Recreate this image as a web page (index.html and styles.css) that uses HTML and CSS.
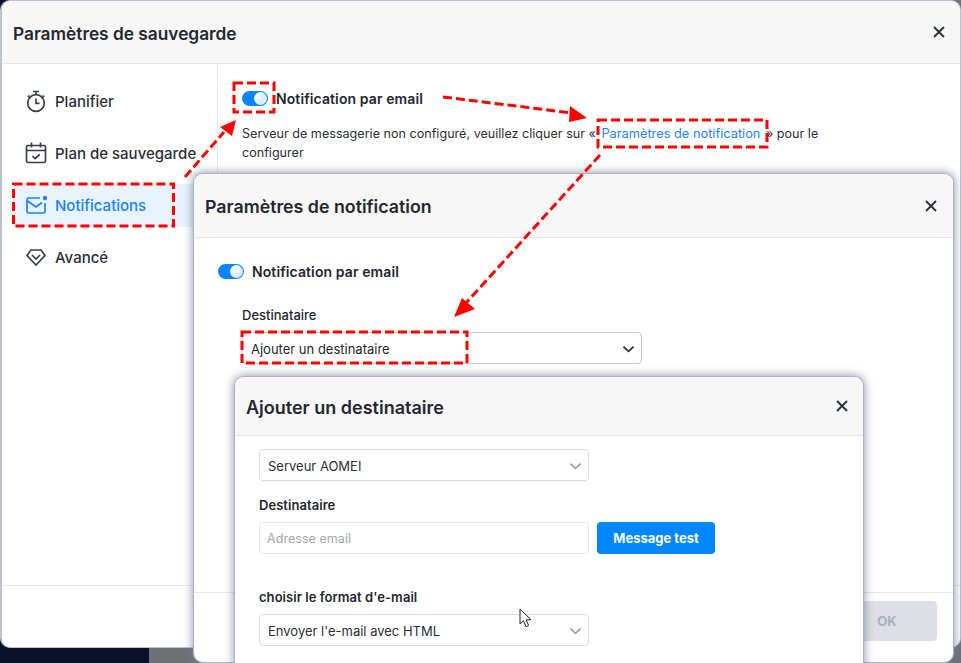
FILE: index.html
```html
<!DOCTYPE html>
<html lang="fr">
<head>
<meta charset="utf-8">
<title>Paramètres de sauvegarde</title>
<link rel="stylesheet" href="styles.css">
</head>
<body>
<div class="desktop">
  <section class="dialog dialog-main">
    <header class="dialog-head head-main">
      <h1>Paramètres de sauvegarde</h1>
      <svg class="close" viewBox="0 0 12 12"><path d="M1 1l10 10M11 1L1 11"/></svg>
    </header>
    <div class="main-body">
      <nav class="side">
        <a class="side-item">
          <svg class="side-icon" viewBox="0 0 24 24"><path d="M9 2.500h6M12 2.500v3M18.400 6.500l1.600 1.600M4 8.100l1.600-1.600"/><circle cx="12" cy="14" r="8.300"/><path d="M12 9.500v4.800h3.500"/></svg>
          <span>Planifier</span>
        </a>
        <a class="side-item">
          <svg class="side-icon" viewBox="0 0 24 24"><rect x="2.500" y="4.500" width="19" height="17" rx="1.500"/><path d="M7.500 1.500v5M16.500 1.500v5M2.500 9.500h19M8.500 15l2.600 2.500 4.600-4"/></svg>
          <span>Plan de sauvegarde</span>
        </a>
        <a class="side-item active">
          <svg class="side-icon" viewBox="0 0 24 24"><path d="M16 5H4.500A1.500 1.500 0 0 0 3 6.500v12A1.500 1.500 0 0 0 4.500 20h15a1.500 1.500 0 0 0 1.500-1.500V10"/><path d="M3.500 8l8.500 6 6-4.500"/><circle class="dot" cx="21" cy="5" r="2.200"/></svg>
          <span>Notifications</span>
        </a>
        <a class="side-item">
          <svg class="side-icon" viewBox="0 0 24 24"><path d="M7 5h10l4 5.500-9 9.500-9-9.500z"/><path d="M8 10l4 4 4-4"/></svg>
          <span>Avancé</span>
        </a>
      </nav>
      <div class="content">
        <div class="switch-row row-main">
          <span class="switch"><i></i></span>
          <strong>Notification par email</strong>
        </div>
        <p class="note">Serveur de messagerie non configuré, veuillez cliquer sur « <a class="link">Paramètres de notification</a> » pour le configurer</p>
      </div>
    </div>
    <div class="rule-main"></div>
  </section>

  <section class="dialog dialog-second">
    <header class="dialog-head head-second">
      <h2>Paramètres de notification</h2>
      <svg class="close" viewBox="0 0 12 12"><path d="M1 1l10 10M11 1L1 11"/></svg>
    </header>
    <div class="second-body">
      <div class="switch-row">
        <span class="switch"><i></i></span>
        <strong>Notification par email</strong>
      </div>
      <div class="recipient">
        <label class="label-plain">Destinataire</label>
        <div class="select select-second">
          <span>Ajouter un destinataire</span>
          <svg class="chev chev-dark" viewBox="0 0 14 8"><path d="M1.500 1.500L7 6.500l5.500-5"/></svg>
        </div>
      </div>
    </div>
    <footer class="second-foot">
      <button class="ok">OK</button>
    </footer>
  </section>

  <svg class="marks" viewBox="0 0 961 663">
    <g class="dash">
      <rect x="234" y="83" width="40" height="29"/>
      <rect x="598" y="120" width="169" height="27"/>
      <rect x="13.500" y="184" width="160" height="42"/>
      <rect x="242" y="332" width="225" height="31"/>
      <path d="M185 177L224 132"/>
      <path d="M443 97L572 113"/>
      <path d="M600 155L466 303"/>
    </g>
    <polygon class="head" points="236,120 232,136 220,127"/>
    <polygon class="head" points="587,118 569,122 570,106"/>
    <polygon class="head" points="454,317 462,298 475,309"/>
  </svg>

  <section class="dialog dialog-third">
    <header class="dialog-head head-third">
      <h2>Ajouter un destinataire</h2>
      <svg class="close" viewBox="0 0 12 12"><path d="M1 1l10 10M11 1L1 11"/></svg>
    </header>
    <div class="third-body">
      <div class="select select-third">
        <span>Serveur AOMEI</span>
        <svg class="chev" viewBox="0 0 14 8"><path d="M1.500 1.500L7 6.500l5.500-5"/></svg>
      </div>
      <label class="label-bold label-dest">Destinataire</label>
      <div class="input-row">
        <div class="input">Adresse email</div>
        <button class="primary">Message test</button>
      </div>
      <label class="label-bold label-format">choisir le format d'e-mail</label>
      <div class="select select-third">
        <span>Envoyer l'e-mail avec HTML</span>
        <svg class="chev" viewBox="0 0 14 8"><path d="M1.500 1.500L7 6.500l5.500-5"/></svg>
      </div>
    </div>
  </section>

  <svg class="cursor" viewBox="0 0 12 20"><path d="M1 1v15l3.500-3.300 2.500 6 2.600-1.100-2.500-5.800H12z"/></svg>
</div>
</body>
</html>
```
FILE: styles.css
```css
* { box-sizing: border-box; }
html, body { margin: 0; padding: 0; }
body { width: 961px; height: 663px; overflow: hidden; font-family: Inter, "Noto Sans", sans-serif; color: #23272f; }
.desktop { position: relative; width: 961px; height: 663px; overflow: hidden; background: linear-gradient(90deg, #0a1128 0, #0a1128 149px, #6f7074 149px); }
h1, h2, p { margin: 0; }

.dialog { position: absolute; background: #fff; display: flex; flex-direction: column; }
.dialog-main { left: 0; top: 0; width: 961px; height: 648px; border: 1px solid #bcc2d0; border-width: 1px 1px 1px 2px; border-radius: 10px; overflow: hidden; }
.dialog-second { left: 193px; top: 173px; width: 761px; height: 490px; border: 1px solid #aeb3c6; border-radius: 10px; box-shadow: 0 0 9px 1px rgba(120, 128, 155, .75); }
.dialog-third { left: 234px; top: 376px; width: 630px; height: 320px; border: 1px solid #aeb3c6; border-radius: 10px; box-shadow: 0 0 9px 1px rgba(120, 128, 155, .75); }

.dialog-head { display: flex; align-items: center; justify-content: space-between; background: #f7f7f8; border-bottom: 1px solid #e4e6eb; flex: none; border-radius: 9px 9px 0 0; }
.dialog-head h1, .dialog-head h2 { font-weight: 600; line-height: 24px; }
.dialog-head h1 { font-size: 17.300px; padding-top: 3px; }
.dialog-head h2 { font-size: 17.800px; }
.head-second h2 { padding-top: 2px; }
.head-third h2 { padding-top: 4px; font-size: 18px; }
.head-main { height: 63px; padding: 0 15px 0 11px; }
.head-second { height: 64px; padding: 0 16px 0 11px; }
.head-third { height: 59px; padding: 0 15px 0 11px; }
.close { width: 12px; height: 12px; fill: none; stroke: #2b2f38; stroke-width: 1.800; }

.main-body { display: flex; height: 521px; flex: none; }
.side { width: 216px; flex: none; border-right: 1px solid #e4e6eb; padding: 16px 0 0 11px; display: flex; flex-direction: column; gap: 9px; }
.side-item { display: flex; align-items: center; gap: 7px; height: 43px; padding-left: 11px; font-size: 15px; font-weight: 500; color: #2b2f38; }
.side-item.active { background: #e8f3ff; color: #1684ff; }
.side-icon { width: 24px; height: 24px; margin-top: -2px; fill: none; stroke: currentColor; stroke-width: 1.700; flex: none; }
.side-item:not(.active) .side-icon { stroke: #3a3e48; }
.dot { fill: #1684ff; stroke: none; }
.content { padding: 24px 0 0 24px; flex: 1; min-width: 0; }
.switch-row { display: flex; align-items: center; gap: 8px; height: 20px; font-size: 14px; letter-spacing: .1px; }
.switch-row strong { font-weight: 600; }
.switch { display: block; width: 26px; height: 15px; border-radius: 8px; background: #0a84ff; padding: 1px 1px 1px 12px; flex: none; }
.switch i { display: block; width: 13px; height: 13px; border-radius: 50%; background: linear-gradient(135deg, #fff, #cfe3ff); }
.note { margin-top: 16px; width: 590px; font-size: 12.600px; line-height: 19px; color: #2b2f38; }
.link { color: #1a85ff; padding: 0 2px; font-size: 12.800px; }
.rule-main { height: 1px; background: #e4e6eb; flex: none; }

.second-body { padding: 23px 24px 0 24px; height: 354px; flex: none; }
.recipient { margin: 26px 0 0 24px; }
.label-plain { display: block; font-size: 13px; font-weight: 500; line-height: 17px; }
.select { display: flex; align-items: center; justify-content: space-between; font-size: 13px; background: #fff; }
.select-second { margin-top: 8px; width: 400px; height: 32px; padding: 1px 6px 0 8px; border: 1px solid #c4c7d2; border-radius: 4px; }
.chev { width: 13px; height: 8px; fill: none; stroke: #9a9da6; stroke-width: 2; }
.chev-dark { stroke: #2b2f38; }
.second-foot { border-top: 1px solid #e4e6eb; flex: none; height: 70px; display: flex; justify-content: flex-end; padding: 8px 16px 0 0; }
.ok { width: 100px; height: 40px; border: 0; border-radius: 4px; background: #dcdfe6; color: #aab0bd; font: 700 13px Inter, sans-serif; padding: 0; }

.third-body { padding: 13px 0 0 24px; }
.select-third { width: 330px; height: 32px; padding: 1px 6px 0 8px; border: 1px solid #d8dbe2; border-radius: 4px; color: #2b2f38; }
.label-bold { display: block; font-size: 13px; font-weight: 600; line-height: 18px; letter-spacing: .05px; }
.label-dest { margin-top: 15px; }
.label-format { margin-top: 34px; }
.input-row { display: flex; gap: 8px; margin-top: 8px; }
.input { width: 330px; height: 32px; border: 1px solid #e4e6eb; border-radius: 4px; padding: 1px 7px 0; font-size: 12.600px; line-height: 30px; color: #a2a6af; }
.primary { width: 118px; height: 32px; border: 0; border-radius: 4px; background: #0086ff; color: #fff; font: 700 13px Inter, sans-serif; padding: 0; }
.label-format + .select { margin-top: 8px; }

.marks { position: absolute; left: 0; top: 0; width: 961px; height: 663px; pointer-events: none; }
.dash { fill: none; stroke: #f00; stroke-width: 3; stroke-dasharray: 9 4; }
.head { fill: #f00; }
.cursor { position: absolute; left: 519px; top: 608px; width: 12px; height: 20px; fill: #fff; stroke: #222; stroke-width: 1; }
```
